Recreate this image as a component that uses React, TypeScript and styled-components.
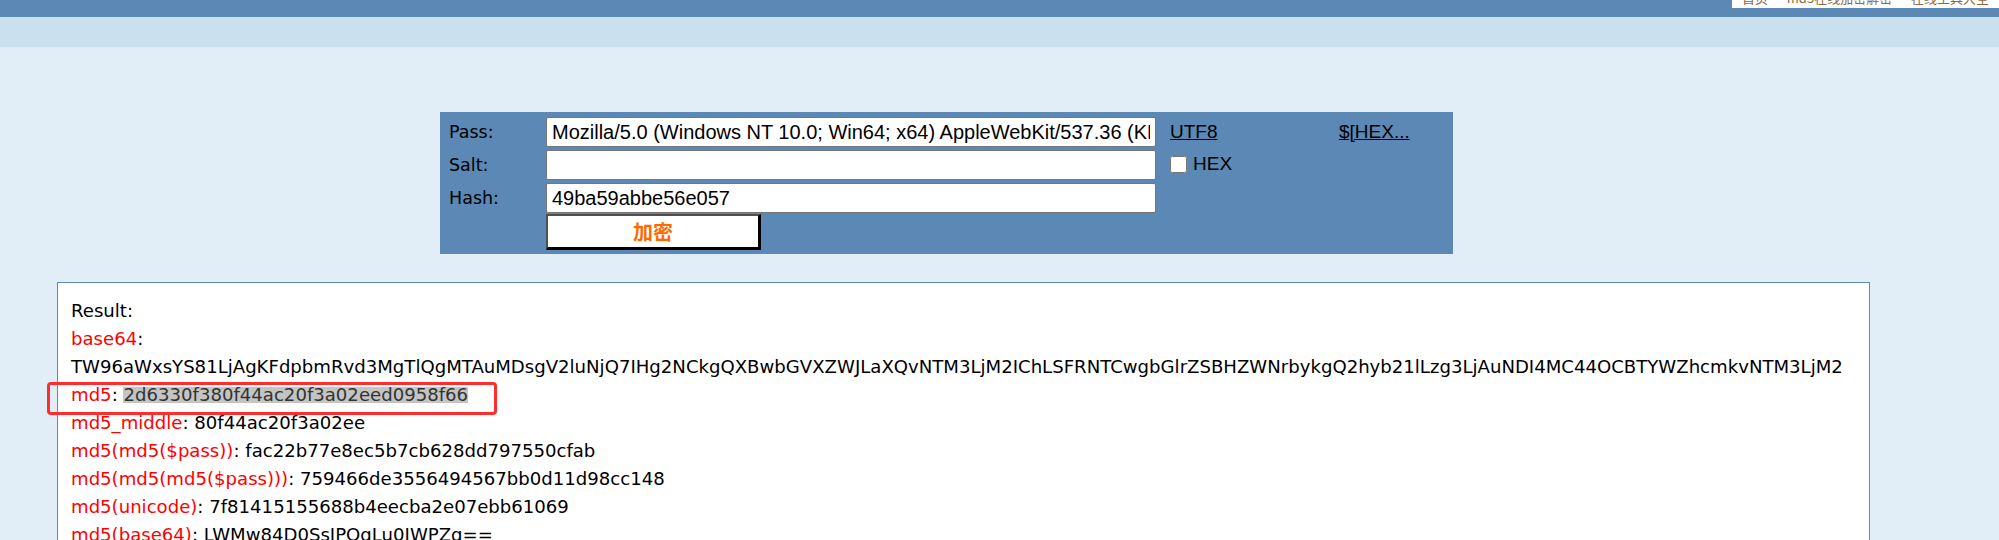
import React from 'react';
import styled, { createGlobalStyle } from 'styled-components';

const GlobalStyle = createGlobalStyle`
  html, body {
    margin: 0;
    padding: 0;
    height: 540px;
    overflow: hidden;
    background: #e1eef7;
  }
  body {
    font-family: "DejaVu Sans", Verdana, sans-serif;
  }
`;

const PASS =
  'Mozilla/5.0 (Windows NT 10.0; Win64; x64) AppleWebKit/537.36 (KHTML, like Gecko) Chrome/87.0.4280.88 Safari/537.36';

const BASE64 =
  'TW96aWxsYS81LjAgKFdpbmRvd3MgTlQgMTAuMDsgV2luNjQ7IHg2NCkgQXBwbGVXZWJLaXQvNTM3LjM2IChLSFRNTCwgbGlrZSBHZWNrbykgQ2hyb21lLzg3LjAuNDI4MC44OCBTYWZhcmkvNTM3LjM2';

const results = [
  { name: 'md5_middle', value: '80f44ac20f3a02ee' },
  { name: 'md5(md5($pass))', value: 'fac22b77e8ec5b7cb628dd797550cfab' },
  { name: 'md5(md5(md5($pass)))', value: '759466de3556494567bb0d11d98cc148' },
  { name: 'md5(unicode)', value: '7f81415155688b4eecba2e07ebb61069' },
  { name: 'md5(base64)', value: 'LWMw84D0SsIPOqLu0JWPZg==' },
];

const App = () => {
  return (
    <Page>
      <GlobalStyle />
      <TopBar />
      <SubBar />
      <Main>
        <FormPanel onSubmit={(e) => e.preventDefault()}>
          <FieldLabel>Pass:</FieldLabel>
          <TextInput readOnly defaultValue={PASS} />
          <TextLink href="#">UTF8</TextLink>
          <TextLink href="#">$[HEX...</TextLink>

          <FieldLabel>Salt:</FieldLabel>
          <TextInput readOnly defaultValue="" />
          <CheckLabel>
            <CheckBox type="checkbox" />
            HEX
          </CheckLabel>
          <span />

          <FieldLabel>Hash:</FieldLabel>
          <TextInput readOnly defaultValue="49ba59abbe56e057" />
          <span />
          <span />

          <SubmitButton type="submit">加密</SubmitButton>
        </FormPanel>

        <ResultBox>
          <Line>Result:</Line>
          <Line>
            <Key>base64</Key>:
          </Line>
          <Line>{BASE64}</Line>
          <MarkedLine>
            <Key>md5</Key>: <Selected>2d6330f380f44ac20f3a02eed0958f66</Selected>
            <Annotation />
          </MarkedLine>
          {results.map((row) => (
            <Line key={row.name}>
              <Key>{row.name}</Key>: {row.value}
            </Line>
          ))}
        </ResultBox>
      </Main>

      <CornerNav>
        <CornerText>首页 · md5在线加密解密 · 在线工具大全 · 联系我们 · 帮助</CornerText>
      </CornerNav>
    </Page>
  );
};

export default App;

const Page = styled.div`
  position: relative;
  min-height: 540px;
`;

const TopBar = styled.div`
  height: 17px;
  background: #5b88b4;
`;

const SubBar = styled.div`
  height: 30px;
  background: #cbe0ef;
`;

const Main = styled.main`
  padding-top: 65px;
`;

const FormPanel = styled.form`
  margin: 0 0 0 440px;
  width: 1013px;
  box-sizing: border-box;
  background: #5b88b4;
  padding: 5px 0 2px 9px;
  display: grid;
  grid-template-columns: 97px 624px 169px 1fr;
  grid-template-rows: 30px 30px 30px 36px;
  row-gap: 3px;
`;

const FieldLabel = styled.label`
  align-self: center;
  font-family: "DejaVu Sans", Verdana, sans-serif;
  font-size: 17.5px;
  color: #000;
`;

const TextInput = styled.input`
  width: 610px;
  height: 30px;
  box-sizing: border-box;
  margin: 0;
  padding: 0 5px;
  border: 1px solid #767676;
  border-radius: 2px;
  background: #fff;
  font-family: "Liberation Sans", Arial, sans-serif;
  font-size: 20px;
  color: #000;
  outline: none;
`;

const TextLink = styled.a`
  align-self: center;
  font-family: "Liberation Sans", Arial, sans-serif;
  font-size: 19px;
  color: #000;
  text-decoration: underline;
`;

const CheckLabel = styled.label`
  display: flex;
  align-items: center;
  gap: 6px;
  align-self: start;
  padding-top: 4px;
  font-family: "Liberation Sans", Arial, sans-serif;
  font-size: 19px;
  line-height: 20px;
  color: #000;
`;

const CheckBox = styled.input`
  width: 17px;
  height: 17px;
  margin: 0;
`;

const SubmitButton = styled.button`
  grid-column: 2;
  width: 215px;
  height: 36px;
  margin-top: -2px;
  box-sizing: border-box;
  padding: 0;
  background: #fff;
  border-style: solid;
  border-width: 2px 3px 3px 2px;
  border-color: #4f4f4f #000 #000 #4f4f4f;
  font-family: "Noto Sans CJK SC", sans-serif;
  font-weight: 700;
  font-size: 20px;
  color: #ff6a00;
  cursor: pointer;
`;

const ResultBox = styled.section`
  margin: 28px 0 0 57px;
  width: 1813px;
  min-height: 320px;
  box-sizing: border-box;
  border: 1px solid #5d8ab8;
  background: #fff;
  padding: 14px 13px;
  font-family: "DejaVu Sans", Verdana, sans-serif;
  font-size: 18.1px;
  line-height: 28px;
  color: #000;
`;

const Line = styled.div`
  white-space: nowrap;
`;

const MarkedLine = styled(Line)`
  position: relative;
`;

const Key = styled.span`
  color: #ff0000;
`;

const Selected = styled.span`
  display: inline-block;
  height: 16px;
  line-height: 16px;
  background: #c4c4c4;
  color: #333;
`;

const Annotation = styled.span`
  position: absolute;
  left: -24px;
  top: 1px;
  width: 450px;
  height: 33px;
  box-sizing: border-box;
  border: 3px solid #ff2d2d;
  border-radius: 4px;
  pointer-events: none;
`;

const CornerNav = styled.nav`
  position: absolute;
  top: 0;
  right: 0;
  width: 267px;
  height: 8px;
  background: #fff;
  overflow: hidden;
`;

const CornerText = styled.div`
  margin-top: -10px;
  padding-left: 10px;
  font-family: "Noto Sans CJK SC", sans-serif;
  font-size: 13px;
  line-height: 16px;
  color: #8b6b3d;
  white-space: nowrap;
`;
